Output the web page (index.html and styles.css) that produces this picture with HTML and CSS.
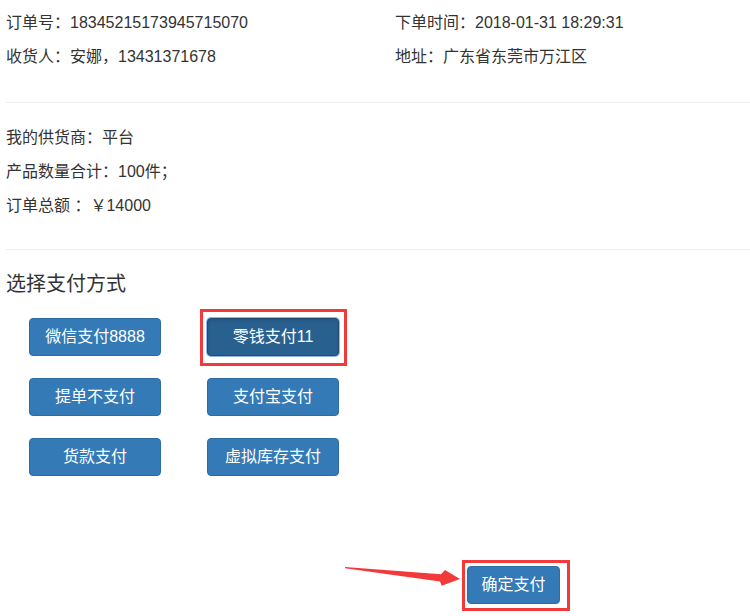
FILE: index.html
```html
<!DOCTYPE html>
<html lang="zh-CN">
<head>
<meta charset="utf-8">
<title>选择支付方式</title>
<link rel="stylesheet" href="styles.css">
</head>
<body>
<div class="page">
  <div class="info-top">
    <div class="cell">订单号：18345215173945715070</div>
    <div class="cell">下单时间：2018-01-31 18:29:31</div>
    <div class="cell">收货人：安娜，13431371678</div>
    <div class="cell">地址：广东省东莞市万江区</div>
  </div>
  <div class="divider"></div>
  <div class="info-mid">
    <div class="cell">我的供货商：平台</div>
    <div class="cell">产品数量合计：100件；</div>
    <div class="cell">订单总额 ：￥14000</div>
  </div>
  <div class="divider divider-2"></div>
  <h3 class="heading">选择支付方式</h3>
  <div class="pay-grid">
    <button class="btn">微信支付8888</button>
    <button class="btn btn-active">零钱支付11</button>
    <button class="btn">提单不支付</button>
    <button class="btn">支付宝支付</button>
    <button class="btn">货款支付</button>
    <button class="btn">虚拟库存支付</button>
  </div>
  <div class="confirm-row">
    <button class="btn btn-confirm">确定支付</button>
  </div>
</div>
<div class="mark mark-1"></div>
<div class="mark mark-2"></div>
<svg class="arrow" width="750" height="616" viewBox="0 0 750 616">
  <polygon points="345,567 441,574.3 445,570 460,579 441.7,585.7 440,581.5 345,568.3" fill="#f23a3a"/>
</svg>
</body>
</html>
```
FILE: styles.css
```css
html, body {
  margin: 0;
  padding: 0;
  background: #fff;
}
body {
  font-family: "Liberation Sans", "Noto Sans CJK SC", sans-serif;
  color: #333;
  font-size: 16px;
  width: 750px;
  height: 616px;
  overflow: hidden;
  position: relative;
}
.page {
  padding: 6px 0 0 6px;
}
.info-top {
  display: grid;
  grid-template-columns: 389px 1fr;
}
.info-mid {
  padding-top: 18px;
}
.cell {
  height: 34px;
  line-height: 34px;
  white-space: nowrap;
}
.divider {
  margin-top: 28px;
  height: 1px;
  background: #eeeeee;
}
.divider-2 {
  margin-top: 26px;
}
.heading {
  margin: 20px 0 0;
  font-size: 20px;
  font-weight: normal;
  line-height: 28px;
  height: 28px;
}
.pay-grid {
  margin-top: 20px;
  padding-left: 23px;
  display: grid;
  grid-template-columns: 132px 132px;
  grid-auto-rows: 38px;
  column-gap: 46px;
  row-gap: 22px;
}
.btn {
  box-sizing: border-box;
  height: 38px;
  padding: 0;
  margin: 0;
  border: 1px solid #2e6da4;
  border-radius: 4px;
  background: #337ab7;
  color: #fff;
  font-family: "Liberation Sans", "Noto Sans CJK SC", sans-serif;
  font-size: 16px;
  line-height: 36px;
  text-align: center;
  white-space: nowrap;
}
.btn-active {
  background: #286090;
  border-color: #204d74;
  box-shadow: 0 0 0 1px #8fb6ea, inset 0 2px 3px rgba(0, 0, 0, 0.1);
}
.confirm-row {
  margin-top: 90px;
  padding-left: 461px;
}
.btn-confirm {
  width: 93px;
}
.mark {
  position: absolute;
  border: 3px solid #f23a3a;
  box-sizing: border-box;
}
.mark-1 {
  left: 200px;
  top: 309px;
  width: 147px;
  height: 57px;
}
.mark-2 {
  left: 462px;
  top: 560px;
  width: 108px;
  height: 51px;
}
.arrow {
  position: absolute;
  left: 0;
  top: 0;
  pointer-events: none;
}
```
